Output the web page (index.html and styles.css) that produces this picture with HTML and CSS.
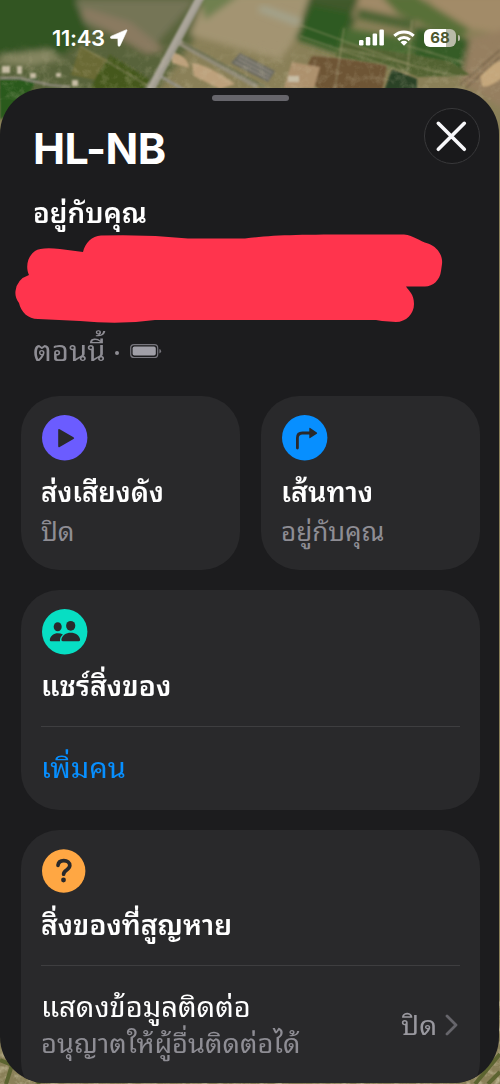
FILE: index.html
```html
<!DOCTYPE html>
<html lang="th">
<head>
<meta charset="utf-8">
<title>HL-NB</title>
<link rel="stylesheet" href="styles.css">
</head>
<body>
<main class="phone">
  <svg class="map" viewBox="0 0 500 1084" aria-hidden="true">
    <defs>
      <filter id="soft" x="-5%" y="-5%" width="110%" height="110%"><feGaussianBlur stdDeviation="3"/></filter>
      <filter id="fine"><feGaussianBlur stdDeviation="0.8"/></filter>
      <filter id="grain" x="0" y="0" width="100%" height="100%">
        <feTurbulence type="fractalNoise" baseFrequency="0.12" numOctaves="4" seed="8"/>
        <feColorMatrix values="0 0 0 0 0.62  0 0 0 0 0.56  0 0 0 0 0.38  2.4 0 0 0 -1.05"/>
      </filter>
      <linearGradient id="fade" x2="0" y2="1"><stop offset="0" stop-color="#000"/><stop offset=".5" stop-color="#fff"/></linearGradient>
      <mask id="lower"><rect y="40" width="500" height="60" fill="url(#fade)"/></mask>
    </defs>
    <rect width="500" height="1084" fill="#8a8058"/>
    <g filter="url(#soft)">
      <path d="M-10-10H230L150 100H-10Z" fill="#59643a"/>
      <path d="M-10-10H75L90 30 65 54 35 60-10 56Z" fill="#315521"/>
      <path d="M75 0h120l-40 45-70-20Z" fill="#757556"/>
      <path d="M85 8l45 14 35 28-18 4-65-38Z" fill="#8a7a60"/>
      <path d="M205-5h105l-5 30-25 35-90-25Z" fill="#a39472"/>
      <path d="M200-5h40l-35 25Z" fill="#6f8050"/>
      <path d="M310-5h58l-18 35-50-5Z" fill="#40582c"/>
      <path d="M312 5l40 8-15 40-42-14Z" fill="#2d5a22"/>
      <path d="M360-5h70l-8 30-70-8Z" fill="#a08a68"/>
      <path d="M430-5h80v40l-78-12Z" fill="#a28b68"/>
      <path d="M358 8l56 12-2 10-56-12Z" fill="#4a6230"/>
      <path d="M380-5h35l55 34-12 10-60-25Z" fill="#587039"/>
      <path d="M345 28l70 12-10 30-68-15Z" fill="#496b31"/>
      <path d="M415 26l58 15-5 35-56-10Z" fill="#345b28"/>
      <path d="M470 38l40-10v85l-50-30Z" fill="#967f61"/>
      <path d="M0 55l50-6 12 10-30 7-32-3Z" fill="#858661"/>
    </g>
    <g filter="url(#fine)">
      <path d="M0 78h38l-15 26-23 16Z" fill="#2b5a1b"/>
      <path d="M80 46l28 14-12 20-25-5Z" fill="#6a6a34"/>
      <path d="M110 55l40 25-10 15H88l8-18Z" fill="#45581f"/>
      <path d="M335 58l52 7-5 26h-60l-20-15 10-20Z" fill="#6e5436"/>
      <path d="M292 62l28 5-6 21h-30Z" fill="#ad916d"/>
      <path d="M392 69l25 10v12h-33Z" fill="#2a4325"/>
      <path d="M336 56l50 8 32 13 52-2-20-14-108-18Z" fill="#526432"/>
      <path d="M192 63q15 1 43 21l-15 5-26-13Z" fill="#bda17b"/>
      <path d="M172 52q16 4 17 16l-17-5Z" fill="#bda17b"/>
      <path d="M480 75q18-18 30-15v12q-22 18-28 14Z" fill="#c5a77b"/>
      <path d="M240 53l35 18-7 11-37-19Z" fill="#696961"/>
      <g fill="none" stroke="#a9a193" stroke-width="1"><path d="M240 56l32 17M238 59l32 17M235 62l34 17"/></g>
      <g fill="none" stroke="#a39b72" stroke-width="1" opacity=".7">
        <path d="M300 25l110 40 50 12M300 36l110 38M344 28l-9 60M80 46l40 23 28 17M412 20l-5 54-10-10M340 48l70 16M405 45l60 18"/>
      </g>
      <g fill="#c7bda5"><path d="M2 66h8v7H2zm15 0h5v8h-5zm13 7h6v5h-6zm26 0h5v4h-5zm16 7h6v6h-6zM288 76h11v6h-11z"/></g>
      <path d="M0 78h20l30 7 20 2" fill="none" stroke="#8b8779" stroke-width="2.5"/>
      <path d="M175 40l82 46" stroke="#928c78" stroke-width="6"/>
      <path d="M183 43l82 44" stroke="#6c7050" stroke-width="2"/>
      <path d="M160 76l24 14" stroke="#918e82" stroke-width="3"/>
      <path d="M201-4L148 94" stroke="#aaa59a" stroke-width="8"/>
      <path d="M202 0L150 94" stroke="#8f8b80" stroke-width="1"/>
      <path d="M460 85l40-35M466 88l34-31" stroke="#756249" stroke-width="1.5"/>
    </g>
    <path d="M262 5l40 14-5 7-40-15Z" fill="#a3a38c" filter="url(#soft)"/>
    <g mask="url(#lower)"><rect y="40" width="500" height="60" filter="url(#grain)" opacity=".22"/></g>
    <rect y="1000" width="500" height="84" filter="url(#grain)" opacity=".8"/>
    <path d="M0 1060l12 5-6 19M28 1072l12 12M475 1084l25-30M488 1084l12-12" fill="none" stroke="#5c6430" stroke-width="4"/>
  </svg>

  <header class="status">
    <div class="status-left">
      <span class="clock">11:43</span>
      <svg class="location" viewBox="0 0 18 18"><path d="M15.9.9 1.2 7.2C-.2 7.9.1 9.4 1.6 9.4l6.3.1.1 6.6c0 1.5 1.6 1.7 2.2.3L16.8 2.1C17.3.9 16.8.5 15.9.9Z" fill="#fff" stroke="#fff" stroke-width=".6"/></svg>
    </div>
    <div class="status-right">
      <svg class="signal" viewBox="0 0 26 17"><g fill="#fff"><rect x="0" y="11" width="4.5" height="5.5" rx="1.2"/><rect x="6.8" y="8" width="4.5" height="8.5" rx="1.2"/><rect x="13.6" y="4.6" width="4.5" height="11.9" rx="1.2"/><rect x="20.4" y=".5" width="4.5" height="16" rx="1.2"/></g></svg>
      <svg class="wifi" viewBox="0 0 22 16"><g fill="none" stroke="#fff" stroke-width="3"><path d="M1.3 5.9a14 14 0 0 1 19.4 0"/><path d="M5.2 9.8a8.4 8.4 0 0 1 11.6 0"/></g><path d="M11 15.8 7.5 12.3a5 5 0 0 1 7 0Z" fill="#fff"/></svg>
      <span class="battery"><span class="level">68</span></span>
    </div>
  </header>

  <section class="sheet">
    <div class="grabber"></div>
    <div class="heading">
      <h1>HL-NB</h1>
      <button class="close" aria-label="ปิด"><svg viewBox="0 0 56 56"><path d="M14.3 15.3l26 26M40.3 15.3l-26 26" stroke="#f7f7fa" stroke-width="3.6" stroke-linecap="round"/></svg></button>
    </div>
    <p class="place"><span class="fit place-text">อยู่กับคุณ</span></p>
    <svg class="redaction" viewBox="0 0 500 90" aria-hidden="true"><path d="M83 19C85 10 92 3 101 2.500Q145 1 188 5.500H245C280 1 310 1.500 404 1.500C414 2.500 419 8 428 10.500C438 14 443 23 442 31L441 38C440 47 433 53.500 425 53.500H406C409 58 414 61 414 71C414 81 406 89 396 89L382 88 376 87H155Q120 92 80 88L59 87 38 86C28 86 21 79 19 70C16 66 15 62 15.500 58Q17 46 29 42C25 33 28 23 35 18Q41 14 60 16Z" fill="#ff344d"/></svg>
    <div class="updated">
      <span class="fit now-text">ตอนนี้</span><span class="dot"></span>
      <svg class="cell" viewBox="0 0 32 15"><rect x=".7" y=".7" width="27" height="12.8" rx="3.3" fill="none" stroke="#77767d" stroke-width="1.2"/><rect x="2.6" y="2.6" width="23.2" height="9" rx="1.8" fill="#a09fa7"/><path d="M29.4 5q1.7.6 1.7 2.2t-1.7 2.2Z" fill="#77767d"/></svg>
    </div>

    <div class="cards">
      <article class="card">
        <svg class="icon" viewBox="0 0 46 46"><circle cx="22.7" cy="22.7" r="22.7" fill="#6b5cff"/><path d="M16.2 15v16.2q0 1.7 1.5.9l13.8-8q1.4-.9 0-1.8l-13.8-8.1q-1.5-.8-1.5.8Z" fill="#29292b"/></svg>
        <h2><span class="fit sound-text">ส่งเสียงดัง</span></h2>
        <p><span class="fit off-text">ปิด</span></p>
      </article>
      <article class="card">
        <svg class="icon" viewBox="0 0 46 46"><circle cx="22.7" cy="22.7" r="22.7" fill="#078fff"/><path d="M15.4 33V23q0-5 5-5h8" fill="none" stroke="#29292b" stroke-width="2.8" stroke-linecap="round"/><path d="M27.3 13.5v9q0 1 .9.4l6.6-4.2q.7-.7 0-1.3l-6.6-4.5q-.9-.5-.9.6Z" fill="#29292b"/></svg>
        <h2><span class="fit route-text">เส้นทาง</span></h2>
        <p><span class="fit with-text">อยู่กับคุณ</span></p>
      </article>
      <article class="card share">
        <svg class="icon" viewBox="0 0 46 46"><circle cx="22.7" cy="22.7" r="22.7" fill="#07dec3"/><g fill="#29292b"><ellipse cx="15.7" cy="17.7" rx="4" ry="4.5"/><ellipse cx="28.7" cy="16.8" rx="4.6" ry="4.9"/><path d="M18 32.200H9q-1.400 0-1.200-1.500c.7-4.100 4-6.500 8-6.500q3 0 5.100 1.300-3.300 2.800-2.900 6.700Z"/><path d="M20.7 32.2q-1.5 0-1.3-1.6c.8-4.2 4.5-6.8 9.3-6.8s8.700 2.600 9.400 6.800q.2 1.600-1.300 1.600Z"/></g></svg>
        <h2><span class="fit share-text">แชร์สิ่งของ</span></h2>
        <hr>
        <a class="add"><span class="fit add-text">เพิ่มคน</span></a>
      </article>
      <article class="card lost">
        <svg class="icon" viewBox="0 0 46 46"><circle cx="21.700" cy="22" r="21.700" fill="#ffa743"/><path d="M16 16.300c.4-3.100 2.800-4.600 5.800-4.600 3.400 0 6 1.900 6 4.900 0 4.400-6.200 4.300-6.200 8.600" fill="none" stroke="#29292b" stroke-width="3.700" stroke-linecap="round"/><circle cx="21.500" cy="31" r="2.400" fill="#29292b"/></svg>
        <h2><span class="fit lost-text">สิ่งของที่สูญหาย</span></h2>
        <hr>
        <div class="contact">
          <div class="contact-copy">
            <h3><span class="fit contact-text">แสดงข้อมูลติดต่อ</span></h3>
            <p><span class="fit allow-text">อนุญาตให้ผู้อื่นติดต่อได้</span></p>
          </div>
          <div class="setting"><span class="fit setting-text">ปิด</span><svg class="chevron" viewBox="0 0 14 22"><path d="M2 2l9 9-9 9" fill="none" stroke="#66656b" stroke-width="2.8" stroke-linecap="round" stroke-linejoin="round"/></svg></div>
        </div>
      </article>
    </div>
  </section>
</main>
</body>
</html>
```
FILE: styles.css
```css
* { box-sizing: border-box; }
body { margin: 0; background: #1c1c1e; color: #fff; font-family: Inter, "Noto Sans Thai Looped", "Noto Looped Thai", Loma, Garuda, Waree, Thonburi, "Noto Sans Thai", sans-serif; }
h1, h2, h3, p { margin: 0; }
svg { display: block; flex: none; }
.phone { position: relative; width: 500px; height: 1084px; overflow: hidden; }
.map { position: absolute; inset: 0; width: 500px; height: 1084px; }
.status { position: relative; height: 88px; padding: 25px 43px 0 52px; display: flex; justify-content: space-between; align-items: flex-start; }
.status-left, .status-right { display: flex; align-items: center; height: 25px; }
.clock { font-size: 22px; font-weight: 560; letter-spacing: -.3px; width: 58px; white-space: nowrap; }
.location { width: 18px; height: 18px; }
.signal { width: 26px; height: 17px; margin: 0 8px 0 0; }
.wifi { width: 22px; height: 16px; margin-right: 9px; }
.battery { position: relative; width: 32px; height: 18px; border-radius: 6px; background: linear-gradient(90deg, #fff 68%, #b9bba8 68%); }
.battery::after { content: ""; position: absolute; left: 33.5px; top: 6px; width: 2px; height: 6px; border-radius: 0 2px 2px 0; background: #b9bba8; }
.level { display: block; text-align: center; font-size: 15px; line-height: 18px; font-weight: 700; color: #4d572f; }
.status-right { margin-right: 1px; }
.sheet { position: relative; width: 499px; height: 995px; overflow: hidden; background: #1c1c1e; border-radius: 46px; }
.grabber { width: 77px; height: 6px; margin: 7px 0 0 212px; border-radius: 3px; background: #66656b; }
.heading { display: flex; justify-content: space-between; height: 88px; padding: 7px 19px 0 33px; }
h1 { font-size: 43px; line-height: 52px; font-weight: 700; padding-top: 14px; letter-spacing: -.6px; }
.close { width: 56px; height: 56px; padding: 0; border: 1px solid #39393b; border-radius: 50%; background: #19191b; }
.close svg { width: 56px; height: 56px; margin: -1px; }
.fit { display: inline-block; white-space: nowrap; transform-origin: left center; }
.place { height: 44px; padding-left: 33px; font-size: 27px; font-weight: 600; line-height: 50px; }
.place-text { transform: scaleX(1.03); }
.redaction { width: 500px; height: 90px; }
.updated { display: flex; align-items: center; height: 73px; padding: 0 0 16px 33px; color: #8e8d94; font-size: 28px; }
.now-text { width: 72px; margin-top: -7px; transform: scaleX(1.05); }
.dot { width: 4px; height: 4px; border-radius: 50%; background: #8e8d94; margin: 3px 11px 0 10px; }
.cell { width: 32px; height: 15px; }
.cards { display: grid; grid-template-columns: 219px 219px; gap: 20px 21px; padding-left: 21px; }
.card { height: 174px; padding: 19px 20px 0; border-radius: 38px; background: #29292b; }
.icon { width: 46px; height: 46px; margin-left: 1px; }
h2 { height: 46px; margin-top: 6px; font-size: 27px; line-height: 52px; font-weight: 600; }
.sound-text { transform: scaleX(1.02); }
.route-text { transform: scaleX(1.06); }
.share-text { transform: scaleX(1.055); }
.lost-text { transform: scaleX(1.045); }
.card p { height: 36px; font-size: 26px; line-height: 38px; color: #8e8d94; }
.share, .lost { grid-column: 1 / 3; }
.share { height: 220px; }
.lost { height: 270px; }
.lost h2 { height: 45px; line-height: 49px; }
hr { width: 419px; height: 1px; margin: 19px 0 0; border: 0; background: #3e3e40; }
.add { display: block; color: #078fff; font-size: 28px; line-height: 82px; }
.add-text { transform: scaleX(1.04); }
.contact { display: flex; justify-content: space-between; padding-top: 21px; }
h3 { height: 38px; font-size: 28px; line-height: 40px; font-weight: 400; }
.contact-text { transform: scaleX(1.04); }
.allow-text { transform: scaleX(1.05); }
.setting { display: flex; align-items: center; height: 76px; color: #99989f; font-size: 27px; }
.setting-text { width: 36px; margin: -6px 8px 0 0; transform: scaleX(1.04); }
.chevron { width: 14px; height: 22px; margin: -1px 1px 0 0; }
```
